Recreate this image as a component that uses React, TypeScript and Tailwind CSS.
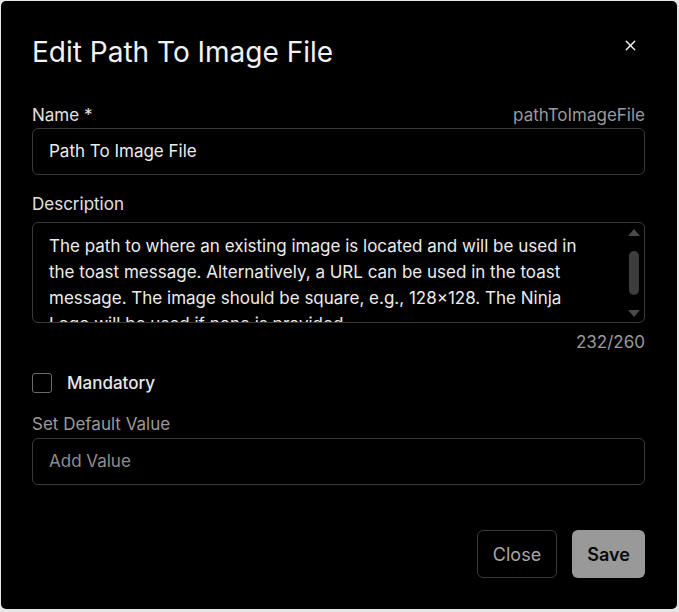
import React from 'react';
import { X } from 'lucide-react';

const description =
  'The path to where an existing image is located and will be used in the toast message. Alternatively, a URL can be used in the toast message. The image should be square, e.g., 128×128. The Ninja Logo will be used if none is provided.';

export default function App() {
  return (
    <div className="h-[612px] w-[679px] bg-[#e6e6e6] pl-[1px] pt-[1px]" style={{ fontFamily: 'Inter, "Noto Sans", sans-serif' }}>
      <div className="relative flex h-[608px] w-[676px] flex-col rounded-[5px] bg-black pl-[31px] pr-[32px] pt-[33px]">
        {/* header */}
        <div className="flex items-center justify-between">
          <h2 className="text-[28px] leading-[36px] font-normal text-[#f2f2f2]">Edit Path To Image File</h2>
          <button className="mr-[6px] -mt-[14px] text-[#f0f0f0]">
            <X className="h-[17px] w-[17px]" strokeWidth={2} />
          </button>
        </div>

        {/* name */}
        <div className="mt-[35px] flex items-center justify-between text-[17px] leading-[20px]">
          <span className="text-[#e2e2e2]">Name *</span>
          <span className="text-[#9a9a9a]">pathToImageFile</span>
        </div>
        <div className="mt-[3px] flex h-[47px] items-center rounded-[6px] border border-[#3a3a3a] px-4 text-[17px] text-[#ececec]">
          Path To Image File
        </div>

        {/* description */}
        <div className="mt-[19px] text-[17px] leading-[20px] text-[#e2e2e2]">Description</div>
        <div className="relative mt-[8px] h-[101px] overflow-hidden rounded-[6px] border border-[#3a3a3a] pl-4 pr-[54px] pt-[10px]">
          <p className="text-[17px] leading-[26px] text-[#ececec]">{description}</p>
          <div className="absolute right-[4px] top-[6px] flex h-[88px] w-[12px] flex-col items-center justify-between">
            <div className="h-0 w-0 border-x-[6px] border-b-[7px] border-x-transparent border-b-[#4a4a4a]" />
            <div className="h-[44px] w-[10px] rounded-full bg-[#3d3d3d]" />
            <div className="h-0 w-0 border-x-[6px] border-t-[7px] border-x-transparent border-t-[#4a4a4a]" />
          </div>
        </div>
        <div className="mt-[9px] text-right text-[17px] leading-[20px] text-[#9a9a9a]">232/260</div>

        {/* mandatory */}
        <label className="mt-[21px] flex h-[20px] items-center gap-[15px]">
          <span className="h-[20px] w-[20px] rounded-[3px] border border-[#6a6a6a]" />
          <span className="text-[17px] leading-[20px] font-medium text-[#e8e8e8]">Mandatory</span>
        </label>

        {/* default value */}
        <div className="mt-[21px] text-[17px] leading-[20px] text-[#9a9a9a]">Set Default Value</div>
        <div className="mt-[4px] flex h-[47px] items-center rounded-[6px] border border-[#3a3a3a] px-4 text-[17px] text-[#8e8e8e]">
          Add Value
        </div>

        {/* footer */}
        <div className="mt-[45px] flex justify-end gap-[15px]">
          <button className="h-[48px] w-[80px] rounded-[6px] border border-[#3a3a3a] text-[18px] text-[#a6a6a6]">Close</button>
          <button className="h-[48px] w-[73px] rounded-[6px] bg-[#999999] text-[18px] font-semibold text-[#0a0a0a]">Save</button>
        </div>
      </div>
    </div>
  );
}
